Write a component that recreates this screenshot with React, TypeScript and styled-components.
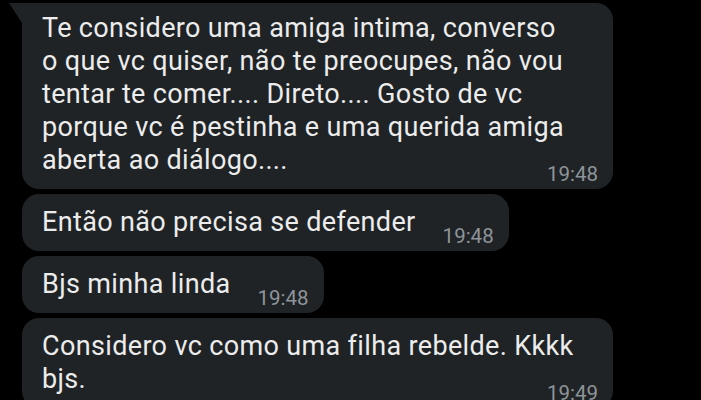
import React from 'react';
import styled, { createGlobalStyle } from 'styled-components';

const GlobalStyle = createGlobalStyle`
  html, body {
    margin: 0;
    padding: 0;
    background: #000;
    overflow: hidden;
  }
  * {
    box-sizing: border-box;
  }
`;

const Chat = styled.div`
  display: flex;
  flex-direction: column;
  align-items: flex-start;
  gap: 5px;
  padding: 3px 0 0 22px;
  width: 701px;
  height: 400px;
  background: #000;
  font-family: Roboto, 'Noto Sans', sans-serif;
`;

// the time shares the last row with the text, so a 2-column grid is enough
const Bubble = styled.div<{ $wide?: boolean; $tail?: boolean }>`
  position: relative;
  display: grid;
  grid-template-columns: 1fr auto;
  width: ${(p) => (p.$wide ? '591px' : 'auto')};
  padding: ${(p) => (p.$tail ? '9px' : '12px')} 15px 3px 20px;
  background: #1f2326;
  border-radius: 17px;
  border-top-left-radius: ${(p) => (p.$tail ? '0' : '17px')};

  // little WhatsApp tail on the first message of the group
  &::before {
    content: '';
    display: ${(p) => (p.$tail ? 'block' : 'none')};
    position: absolute;
    top: 0;
    left: -13px;
    width: 13px;
    height: 20px;
    background: #1f2326;
    clip-path: polygon(0 0, 100% 0, 100% 100%);
  }
`;

const Text = styled.div<{ $wide?: boolean }>`
  grid-row: 1;
  grid-column: ${(p) => (p.$wide ? '1 / 3' : '1')};
  margin-bottom: 9px;
  font-size: 27px;
  line-height: 33px;
  letter-spacing: 0.35px;
  color: #ececec;
  white-space: nowrap;
`;

const Time = styled.span`
  grid-row: 1;
  grid-column: 2;
  align-self: end;
  margin-left: 27px;
  font-size: 20.5px;
  line-height: 24px;
  color: #8e9499;
`;

type Message = {
  lines: string[];
  time: string;
  wide?: boolean;
  tail?: boolean;
};

const messages: Message[] = [
  {
    lines: [
      'Te considero uma amiga intima, converso',
      'o que vc quiser, não te preocupes, não vou',
      'tentar te comer.... Direto.... Gosto de vc',
      'porque vc é pestinha e uma querida amiga',
      'aberta ao diálogo....',
    ],
    time: '19:48',
    wide: true,
    tail: true,
  },
  { lines: ['Então não precisa se defender'], time: '19:48' },
  { lines: ['Bjs minha linda'], time: '19:48' },
  {
    lines: ['Considero vc como uma filha rebelde. Kkkk', 'bjs.'],
    time: '19:49',
    wide: true,
  },
];

const App = (): JSX.Element => {
  return (
    <>
      <GlobalStyle />
      <Chat>
        {messages.map((m, i) => (
          <Bubble key={i} $wide={m.wide} $tail={m.tail}>
            <Text $wide={m.wide}>
              {m.lines.map((line, j) => (
                <div key={j}>{line}</div>
              ))}
            </Text>
            <Time>{m.time}</Time>
          </Bubble>
        ))}
      </Chat>
    </>
  );
};

export default App;
